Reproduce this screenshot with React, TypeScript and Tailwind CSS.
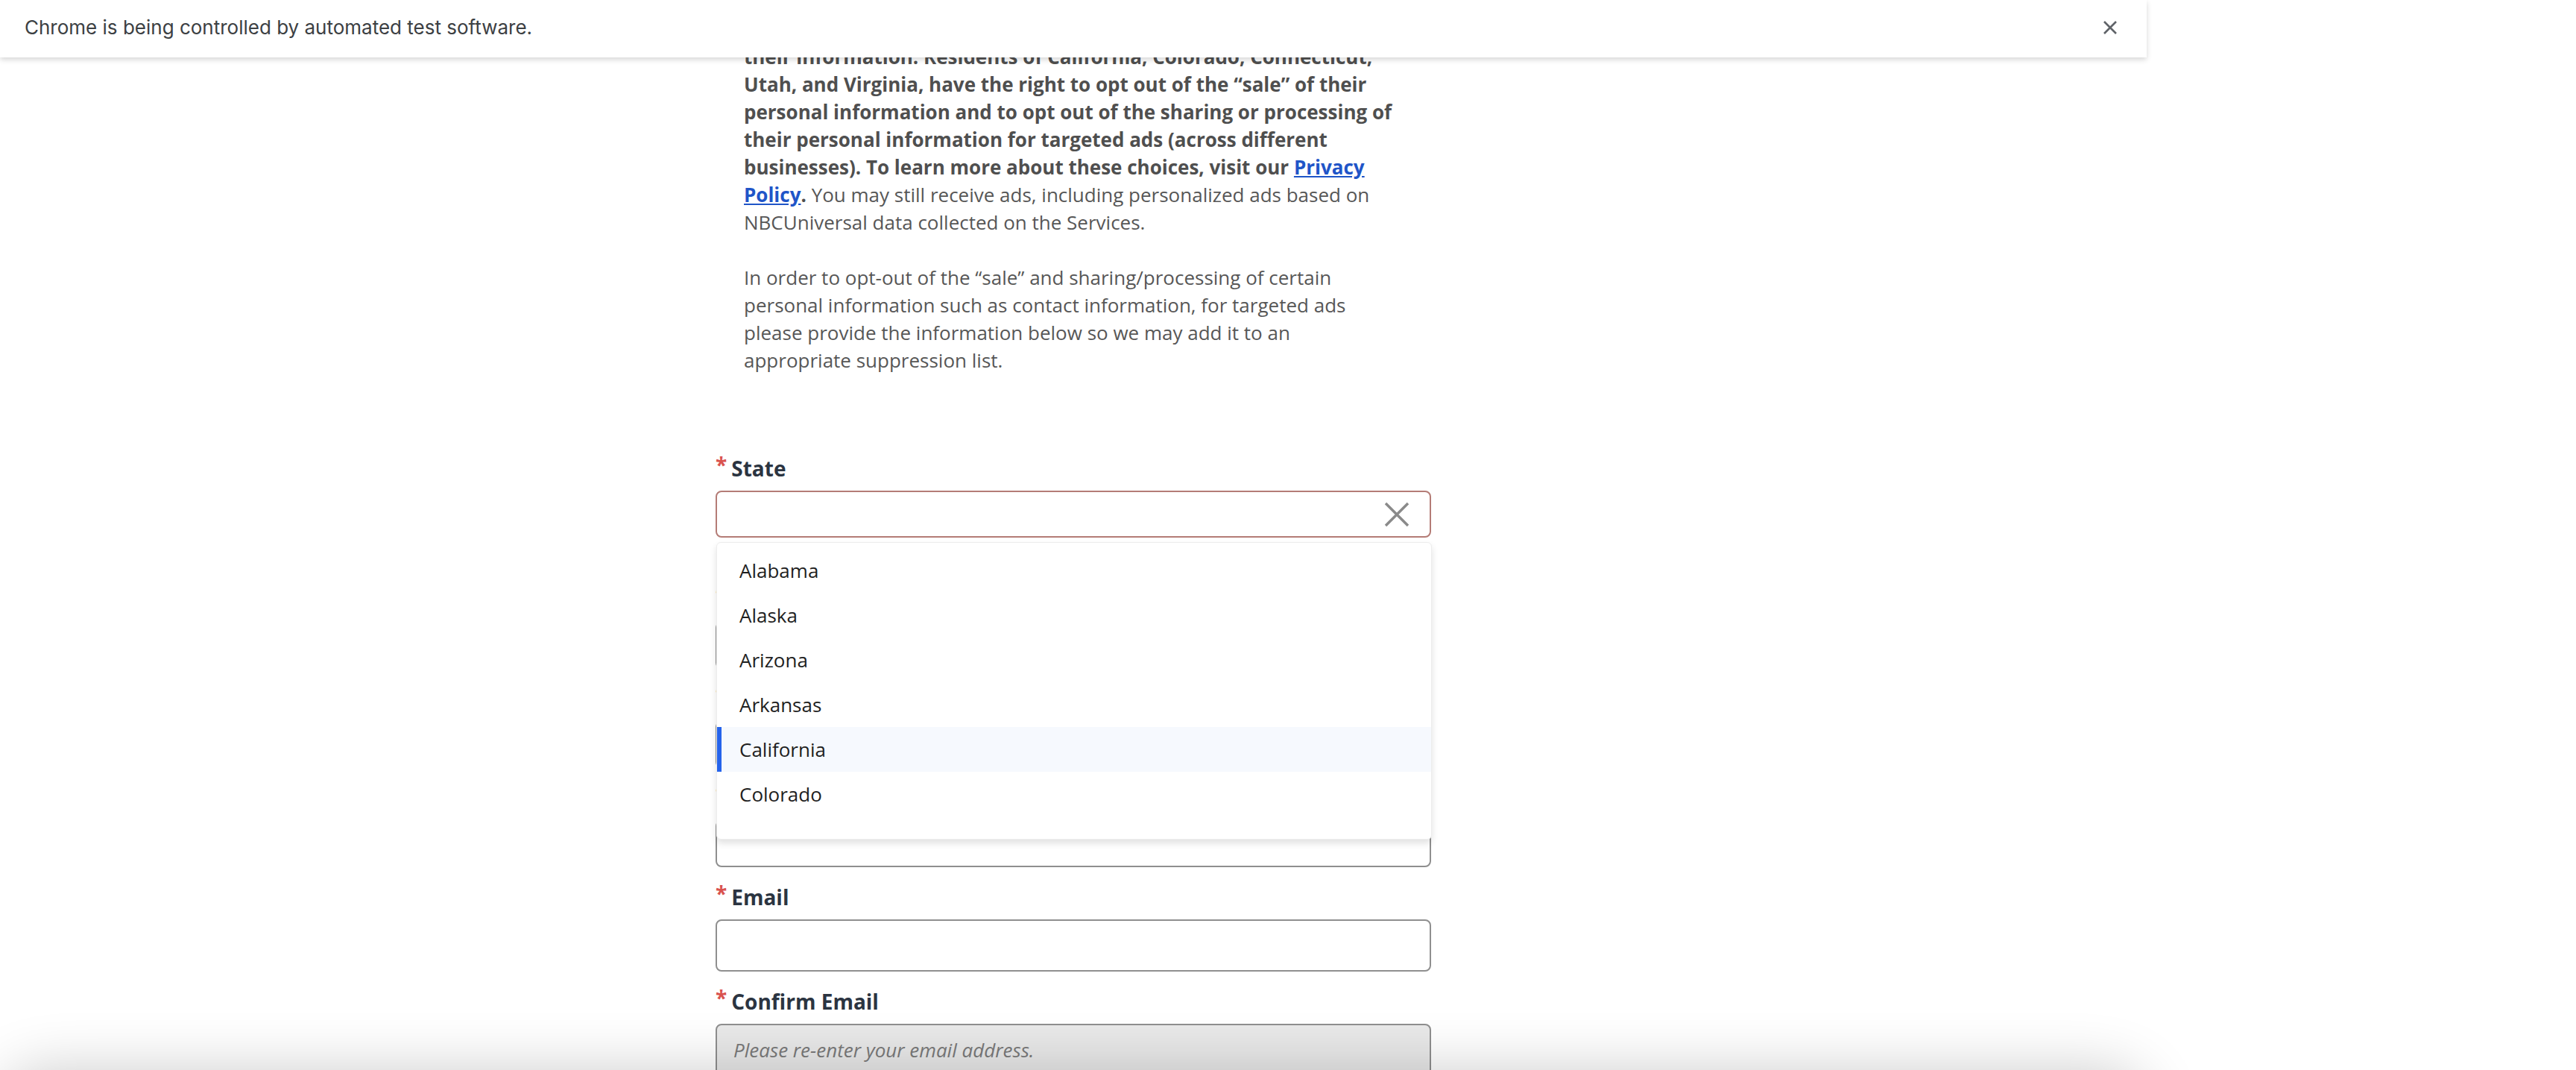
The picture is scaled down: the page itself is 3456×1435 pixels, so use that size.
import React from 'react'

const STATES = ['Alabama', 'Alaska', 'Arizona', 'Arkansas', 'California', 'Colorado']

function FieldLabel({ children }: { children: React.ReactNode }) {
  return (
    <label className="mt-[20px] block h-[40px] text-[28px] font-bold leading-[40px] text-[#2b3441]">
      <span className="mr-[6px] align-[5px] leading-none text-[#d9534f]">*</span>
      {children}
    </label>
  )
}

function TextInput({ h = 'h-[70px]', placeholder, disabled }: { h?: string; placeholder?: string; disabled?: boolean }) {
  return (
    <input
      type="text"
      placeholder={placeholder}
      disabled={disabled}
      className={
        'mt-[10px] block w-full rounded-[8px] border-2 border-[#8f8f8f] px-[22px] text-[26px] outline-none placeholder:italic placeholder:text-[#7a7a7a] ' +
        h +
        (disabled ? ' bg-[#e9e9e9]' : ' bg-white')
      }
    />
  )
}

function StateSelect() {
  return (
    <div className="relative">
      <FieldLabel>State</FieldLabel>
      <div className="mt-[10px] flex h-[63px] items-center justify-end rounded-[8px] border-2 border-[#b47c76] bg-white pr-[27px]">
        <svg width="34" height="34" viewBox="0 0 34 34" fill="none">
          <path d="M2 2L32 32M32 2L2 32" stroke="#8a8a8a" strokeWidth="3.5" />
        </svg>
      </div>
      <p className="mt-[6px] h-[37px] text-[24px] leading-[37px] text-[#d9534f]">Please select a state.</p>

      {/* open listbox */}
      <ul className="absolute left-[1px] right-[-1px] top-[119px] z-10 rounded-[6px] border border-[#ededed] bg-white pb-[30px] pt-[7px] shadow-[0_5px_10px_rgba(0,0,0,0.12)]">
        {STATES.map((s) => (
          <li
            key={s}
            className={
              'flex h-[60px] items-center text-[26px] text-[#1f1f1f] ' +
              (s === 'California' ? 'border-l-[6px] border-[#2563eb] bg-[#f6f9fe] pl-[24px]' : 'pl-[30px]')
            }
          >
            {s}
          </li>
        ))}
      </ul>
    </div>
  )
}

export default function App() {
  return (
    <div className="relative h-[1435px] w-[3456px] overflow-hidden bg-white font-['Open_Sans',sans-serif]">
      <div className="relative flex h-full w-[2880px] flex-col">
        {/* automation infobar */}
        <div className="relative z-20 flex h-[77px] shrink-0 items-center justify-between bg-white pb-[4px] pl-[33px] pr-[39px] shadow-[0_3px_7px_rgba(0,0,0,0.16)]">
          <span className="font-['Inter',sans-serif] text-[26px] text-[#3c4043]">
            Chrome is being controlled by automated test software.
          </span>
          <svg width="20" height="20" viewBox="0 0 20 20" fill="none">
            <path d="M2 2L18 18M18 2L2 18" stroke="#5f6368" strokeWidth="2.6" />
          </svg>
        </div>

        <main className="relative flex-1 overflow-hidden">
          <div className="mx-auto -mt-[19px] w-[960px]">
            <div className="w-[916px] pl-[38px] text-[26px] leading-[37px] text-[#575757]">
              <p>
                <strong className="font-bold text-[#4f4f4f]">
                  their information. Residents of California, Colorado, Connecticut, Utah, and Virginia, have
                  the right to opt out of the “sale” of their personal information and to opt out of the sharing
                  or processing of their personal information for targeted ads (across different businesses). To
                  learn more about these choices, visit our{' '}
                  <a href="#" className="text-[#1f55c8] underline">
                    Privacy Policy
                  </a>
                  .
                </strong>{' '}
                You may still receive ads, including personalized ads based on NBCUniversal data collected on the
                Services.
              </p>
              <p className="mt-[37px]">
                In order to opt-out of the “sale” and sharing/processing of certain personal information such as
                contact information, for targeted ads please provide the information below so we may add it to an
                appropriate suppression list.
              </p>
            </div>

            <form className="mt-[106px]">
              <StateSelect />

              <FieldLabel>First Name</FieldLabel>
              <TextInput h="h-[63px]" />
              <FieldLabel>Last Name</FieldLabel>
              <TextInput h="h-[63px]" />
              <FieldLabel>Zip Code</FieldLabel>
              <TextInput h="h-[63px]" />

              <FieldLabel>Email</FieldLabel>
              <TextInput />
              <FieldLabel>Confirm Email</FieldLabel>
              <TextInput placeholder="Please re-enter your email address." disabled />
            </form>
          </div>
        </main>

        {/* shadow of the fixed banner just below the fold */}
        <div className="absolute left-0 right-0 top-full h-[200px] rounded-[60px] bg-white shadow-[0_0_80px_rgba(0,0,0,0.2)]" />
      </div>
    </div>
  )
}
